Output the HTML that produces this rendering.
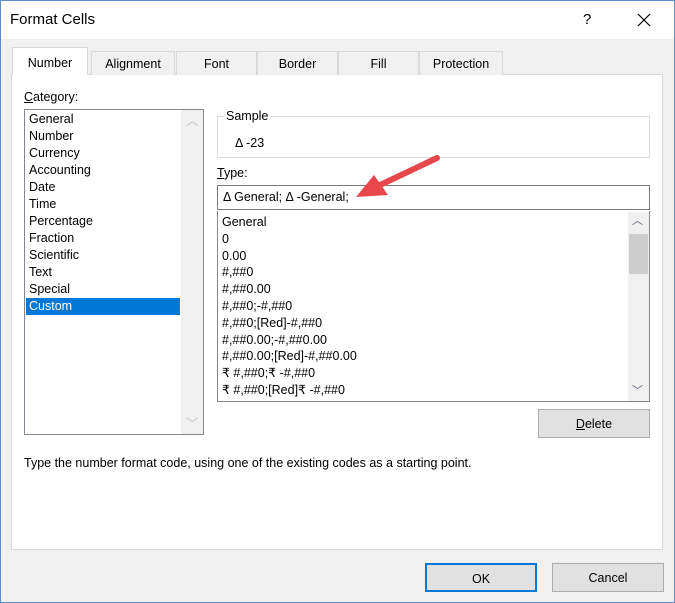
<!DOCTYPE html><html><head><style>
*{margin:0;padding:0;box-sizing:border-box}
body{width:675px;height:603px;background:#f0f0f0;font-family:"Segoe UI","Liberation Sans",sans-serif;font-size:12.5px;color:#000;position:relative;overflow:hidden}
.a{position:absolute}
.win{left:0;top:0;width:675px;height:603px;border:1px solid #5b8fc9}
.title{left:1px;top:1px;width:673px;height:38px;background:#fff}
.tab{top:51px;height:24px;border:1px solid #d9d9d9;border-bottom:none;background:#f0f0f0;text-align:center;line-height:24px}
.li{left:29px;line-height:17px}
.ti{left:222px;line-height:16.8px}
.btn{background:#e1e1e1;border:1px solid #adadad;text-align:center}
</style></head><body>
<div class="a win"></div>
<div class="a title"></div>
<div class="a" style="left:10px;top:11px;font-size:15px">Format Cells</div>
<div class="a" style="left:583px;top:11px;font-size:15px">?</div>
<svg class="a" style="left:637px;top:13px" width="14" height="14"><path d="M1 1L13 13M13 1L1 13" stroke="#000" stroke-width="1.2"/></svg>
<div class="a" style="left:11px;top:74px;width:652px;height:476px;background:#fff;border:1px solid #d9d9d9"></div>
<div class="a tab" style="left:12px;top:47px;width:76px;height:28px;background:#fff;line-height:30px;border-color:#d9d9d9">Number</div>
<div class="a tab" style="left:91px;width:84px">Alignment</div>
<div class="a tab" style="left:176px;width:81px">Font</div>
<div class="a tab" style="left:257px;width:81px">Border</div>
<div class="a tab" style="left:338px;width:81px">Fill</div>
<div class="a tab" style="left:419px;width:84px">Protection</div>
<div class="a" style="left:24px;top:90px"><u>C</u>ategory:</div>
<div class="a" style="left:24px;top:109px;width:180px;height:326px;border:1px solid #828790;background:#fff"></div>
<div class="a" style="left:181px;top:110px;width:22px;height:324px;background:#f0f0f0"></div>
<div class="a" style="left:186px;top:110px;color:#c0c0c0">︿</div>
<div class="a" style="left:186px;top:413px;color:#c0c0c0">﹀</div>
<div class="a" style="left:26px;top:298px;width:154px;height:17px;background:#0078d7"></div>
<div class="a li" style="top:111px">General<br>Number<br>Currency<br>Accounting<br>Date<br>Time<br>Percentage<br>Fraction<br>Scientific<br>Text<br>Special<br><span style="color:#fff">Custom</span></div>
<div class="a" style="left:217px;top:116px;width:433px;height:42px;border:1px solid #dcdcdc"></div>
<div class="a" style="left:224px;top:109px;background:#fff;padding:0 2px">Sample</div>
<div class="a" style="left:235px;top:136px">Δ -23</div>
<div class="a" style="left:217px;top:166px"><u>T</u>ype:</div>
<div class="a" style="left:217px;top:185px;width:433px;height:25px;border:1px solid #7a7a7a;padding:4px 5px">Δ General; Δ -General;</div>
<div class="a" style="left:217px;top:211px;width:433px;height:191px;border:1px solid #828790;border-top:none"></div>
<div class="a" style="left:628px;top:212px;width:21px;height:189px;background:#f0f0f0"></div>
<div class="a" style="left:629px;top:234px;width:19px;height:40px;background:#cdcdcd"></div>
<div class="a" style="left:632px;top:212px;color:#606080;font-size:11px">︿</div>
<div class="a" style="left:632px;top:382px;color:#606080;font-size:11px">﹀</div>
<div class="a ti" style="top:214px;width:400px;height:186px;overflow:hidden">General<br>0<br>0.00<br>#,##0<br>#,##0.00<br>#,##0;-#,##0<br>#,##0;[Red]-#,##0<br>#,##0.00;-#,##0.00<br>#,##0.00;[Red]-#,##0.00<br>₹ #,##0;₹ -#,##0<br>₹ #,##0;[Red]₹ -#,##0</div>
<div class="a btn" style="left:538px;top:409px;width:112px;height:29px;line-height:29px"><u>D</u>elete</div>
<div class="a" style="left:24px;top:456px">Type the number format code, using one of the existing codes as a starting point.</div>
<div class="a btn" style="left:425px;top:563px;width:112px;height:29px;line-height:28px;border:2px solid #0078d7">OK</div>
<div class="a btn" style="left:552px;top:563px;width:112px;height:29px;line-height:29px">Cancel</div>
<svg class="a" style="left:0;top:0" width="675" height="603"><line x1="437" y1="158" x2="378" y2="186" stroke="#e8474b" stroke-width="6" stroke-linecap="round"/><polygon points="356,197 374,175 388,195" fill="#e8474b"/></svg>
</body></html>
